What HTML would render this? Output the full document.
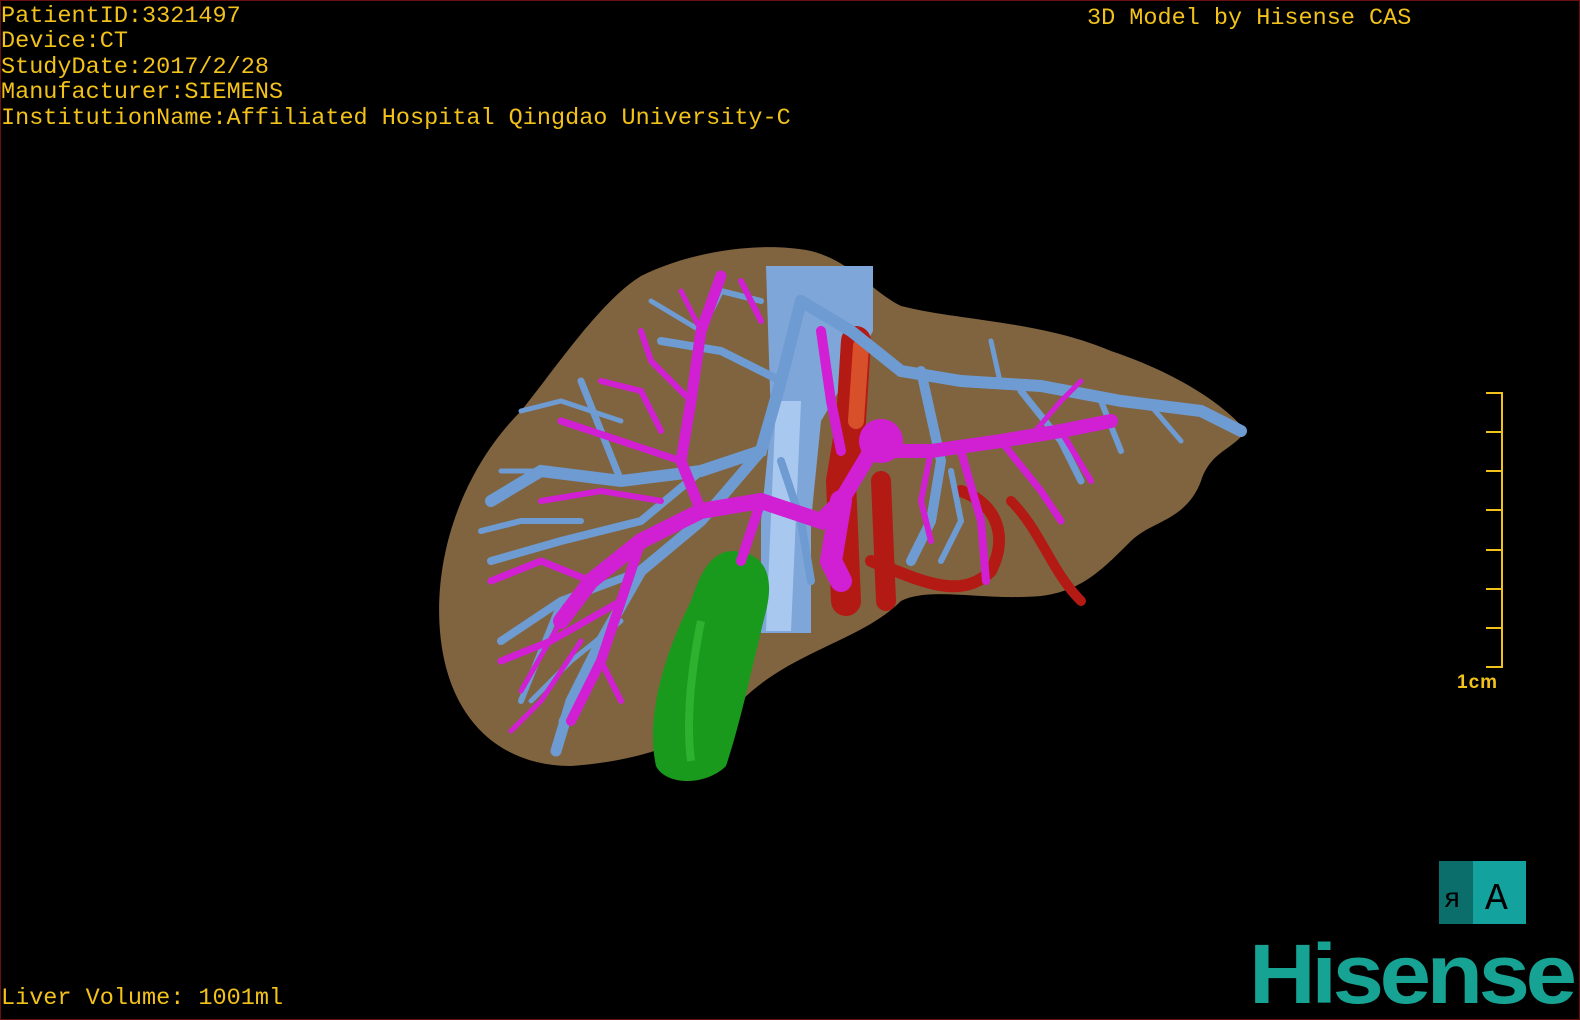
<!DOCTYPE html>
<html><head><meta charset="utf-8"><style>
html,body{margin:0;padding:0;background:#000;}
#w{position:relative;width:1580px;height:1020px;overflow:hidden;background:#000;border:1px solid #6a1010;box-sizing:border-box;}
.t{position:absolute;font-family:"Liberation Mono",monospace;color:#f2c21a;font-size:23.5px;line-height:25.4px;white-space:pre;letter-spacing:0;}
</style></head><body><div id="w">
<div class="t" style="left:0;top:3px">PatientID:3321497
Device:CT
StudyDate:2017/2/28
Manufacturer:SIEMENS
InstitutionName:Affiliated Hospital Qingdao University-C</div>
<div class="t" style="left:1086px;top:5px">3D Model by Hisense CAS</div>
<div class="t" style="left:0;top:985px">Liver Volume: 1001ml</div>

<svg width="1580" height="1020" style="position:absolute;left:0;top:0">
<path d="M440,640 C430,560 460,470 520,410 C560,360 600,300 640,275 C690,250 760,240 810,250 C850,260 870,290 900,305 C960,320 1040,320 1110,350 C1170,370 1220,400 1245,430 C1230,450 1210,450 1200,480 C1185,520 1150,520 1130,540 C1100,570 1080,590 1040,595 C980,600 930,585 900,600 C860,640 790,650 740,700 C700,740 640,760 570,765 C500,765 450,720 440,640 Z" fill="#80643f"/>
<path d="M765,265 L872,265 L872,330 L850,370 L820,420 L810,520 L810,632 L760,632 L760,520 L770,420 Z" fill="#7fa6d9"/>
<path d="M775,400 L800,400 L790,630 L765,630 Z" fill="#a8c8f0"/>
<g fill="none" stroke="#b31a14" stroke-linecap="round">
<path d="M855,340 L850,420 L840,480 L845,600" stroke-width="30"/>
<path d="M860,345 L855,420" stroke="#d8502a" stroke-width="16"/>
<path d="M880,480 L885,600" stroke-width="20"/>
<path d="M870,560 C920,580 960,600 990,570 C1010,530 990,500 960,490" stroke-width="12"/>
<path d="M1010,500 C1040,530 1050,570 1080,600" stroke-width="10"/>
</g>
<path d="M730,550 C760,550 775,570 765,610 C750,670 740,720 725,765 C705,785 665,785 655,765 C645,720 660,660 690,600 C700,570 710,552 730,550 Z" fill="#1a9a1c"/>
<path d="M700,620 C690,670 685,720 690,760" stroke="#3cc23a" stroke-width="8" fill="none" opacity="0.6"/>
<g fill="none" stroke="#6e9bd2" stroke-linecap="round">
<path d="M800,300 L780,380 L760,450 L700,470 L620,480 L540,470 L490,500" stroke-width="12"/>
<path d="M760,450 L700,520 L640,570 L600,640 L570,700 L555,750" stroke-width="11"/>
<path d="M640,570 L560,600 L500,640" stroke-width="8"/>
<path d="M700,470 L640,520 L560,540 L490,560" stroke-width="8"/>
<path d="M620,480 L600,430 L580,380" stroke-width="7"/>
<path d="M800,300 L850,330 L900,370 L960,380 L1040,385 L1120,400 L1200,410 L1240,430" stroke-width="12"/>
<path d="M920,370 L940,460 L930,520 L910,560" stroke-width="10"/>
<path d="M1020,390 L1060,440 L1080,480" stroke-width="7"/>
<path d="M1100,400 L1120,450" stroke-width="6"/>
<path d="M780,380 L720,350 L660,340" stroke-width="8"/>
<path d="M760,300 L720,290 L700,330" stroke-width="6"/>
<path d="M780,460 L800,520 L810,580" stroke-width="8"/>
<path d="M560,600 L520,700" stroke-width="6"/>
<path d="M600,640 L560,720" stroke-width="5"/>
<path d="M540,470 L500,470" stroke-width="5"/>
<path d="M950,470 L960,520 L940,560" stroke-width="6"/>
<path d="M580,520 L520,520 L480,530" stroke-width="6"/>
<path d="M620,420 L560,400 L520,410" stroke-width="5"/>
<path d="M1150,405 L1180,440" stroke-width="5"/>
<path d="M1000,385 L990,340" stroke-width="5"/>
<path d="M700,330 L650,300" stroke-width="5"/>
<path d="M620,620 L570,660 L530,700" stroke-width="5"/>
</g>
<g fill="none" stroke="#d11fd3" stroke-linecap="round">
<path d="M870,450 L930,450 L1000,440 L1060,430 L1110,420" stroke-width="14"/>
<path d="M1000,440 L1040,490 L1060,520" stroke-width="7"/>
<path d="M960,450 L980,520 L985,580" stroke-width="8"/>
<path d="M1060,430 L1090,480" stroke-width="6"/>
<path d="M870,450 L840,500 L820,520 L760,500 L700,510 L640,540 L590,580 L560,620" stroke-width="16"/>
<path d="M700,510 L680,460 L690,400 L700,330 L720,275" stroke-width="11"/>
<path d="M640,540 L620,600 L600,660 L570,720" stroke-width="10"/>
<path d="M590,580 L540,560 L490,580" stroke-width="7"/>
<path d="M620,600 L550,640 L500,660" stroke-width="7"/>
<path d="M680,460 L620,440 L560,420" stroke-width="7"/>
<path d="M690,400 L650,360 L640,330" stroke-width="6"/>
<path d="M700,330 L680,290" stroke-width="5"/>
<path d="M840,500 L830,560 L840,580" stroke-width="22"/>
<path d="M820,330 L830,400 L840,450" stroke-width="10"/>
<path d="M760,500 L740,560" stroke-width="10"/>
<path d="M600,660 L620,700" stroke-width="6"/>
<path d="M560,620 L520,690" stroke-width="5"/>
<path d="M760,320 L740,280" stroke-width="6"/>
<path d="M660,500 L600,490 L540,500" stroke-width="6"/>
<path d="M660,430 L640,390 L600,380" stroke-width="6"/>
<path d="M580,640 L540,700 L510,730" stroke-width="5"/>
<path d="M1030,435 L1060,400 L1080,380" stroke-width="5"/>
<path d="M930,450 L920,500 L930,540" stroke-width="6"/>
</g>
<circle cx="880" cy="440" r="22" fill="#d11fd3"/>
<g stroke="#f2c21a" stroke-width="2" fill="none">
<path d="M1485,392 H1501 V666 H1485"/>
<path d="M1485,431H1501M1485,470H1501M1485,509H1501M1485,549H1501M1485,588H1501M1485,627H1501"/>
</g>
<text x="1456" y="687" font-family="Liberation Sans,sans-serif" font-size="19" font-weight="bold" fill="#f2c21a" letter-spacing="1">1cm</text>
<rect x="1438" y="860" width="35" height="63" fill="#0c6e6a"/>
<rect x="1472" y="860" width="53" height="63" fill="#14a29e"/>
<text x="1443" y="906" font-family="Liberation Mono,monospace" font-size="28" fill="#000">ᴙ</text>
<text x="1484" y="908" font-family="Liberation Mono,monospace" font-size="38" fill="#000">A</text>
</svg>
<div style="position:absolute;left:1248px;top:928px;font-family:'Liberation Sans',sans-serif;font-weight:bold;font-size:84px;color:#17a394;letter-spacing:-4px;transform:scaleX(1.1);transform-origin:left top;line-height:90px;">Hisense</div>
</div></body></html>
